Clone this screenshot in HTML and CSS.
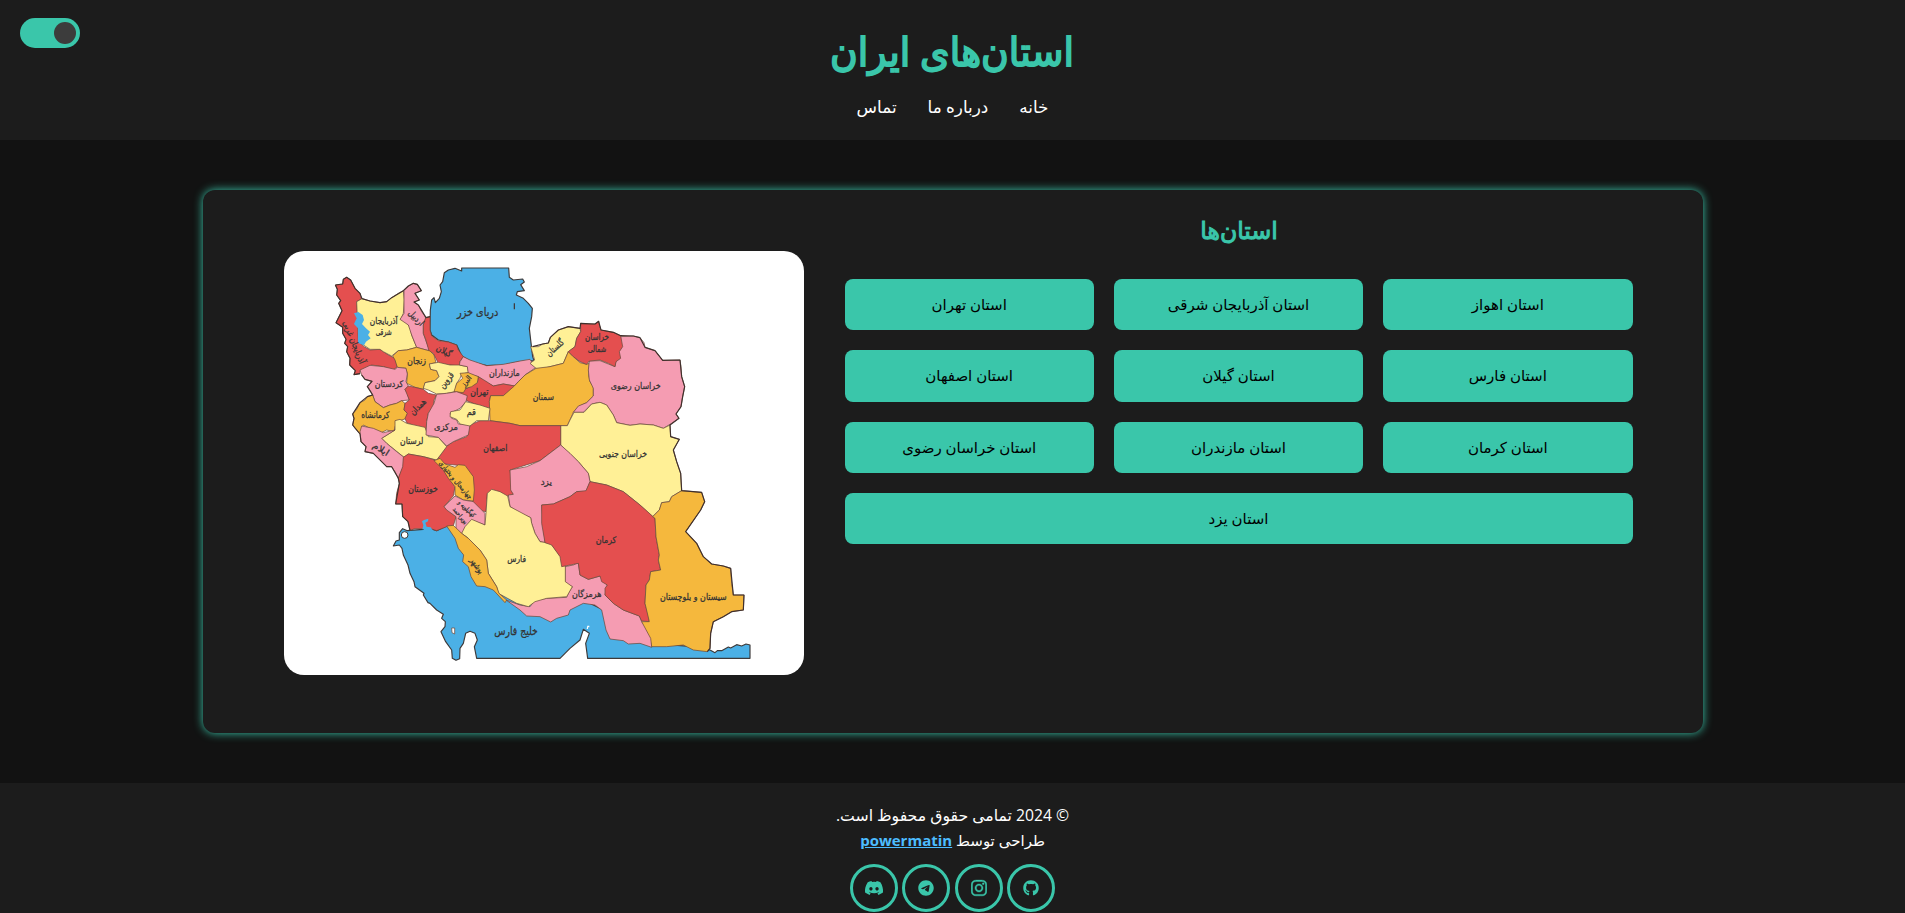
FILE: index.html
```html
<!DOCTYPE html>
<html lang="fa" dir="rtl">
<head>
<meta charset="utf-8">
<title>استان‌های ایران</title>
<link rel="stylesheet" href="styles.css">
</head>
<body>
<header class="header">
  <div class="switch"><span class="knob"></span></div>
  <h1 class="title">استان‌های ایران</h1>
  <nav class="nav"><a>خانه</a><a>درباره ما</a><a>تماس</a></nav>
</header>
<main class="container">
  <section class="provinces">
    <h2 class="subtitle">استان‌ها</h2>
    <div class="grid">
      <a class="btn">استان اهواز</a><a class="btn">استان آذربایجان شرقی</a><a class="btn">استان تهران</a>
      <a class="btn">استان فارس</a><a class="btn">استان گیلان</a><a class="btn">استان اصفهان</a>
      <a class="btn">استان کرمان</a><a class="btn">استان مازندران</a><a class="btn">استان خراسان رضوی</a>
      <a class="btn wide">استان یزد</a>
    </div>
  </section>
  <div class="map">
    <svg viewBox="12 3 1560 1272" width="520" height="424">
      <g class="land">
        <path class="b coast" d="M340,888L348,873 358,870 358,848 368,836 382,842 390,841 430,838 427,815 445,806 444,814 435,818 442,832 470,842 500,828 560,860 660,1030 800,1060 910,1050 970,1080 1010,1160 1115,1180 1240,1190 1290,1200 1305,1208 1312,1202 1325,1202 1345,1191 1352,1194 1370,1184 1385,1188 1398,1182 1410,1185V1225H923L917,1180 928,1150 910,1138 900,1170 870,1195 840,1225H590L583,1190 592,1170 585,1150 570,1144 557,1150 550,1180 540,1195 539,1226 528,1231 517,1225 515,1200 497,1175 483,1145 495,1130 496,1115 485,1105 490,1093 470,1080 450,1060 444,1058 430,1035 432,1030 405,1010 402,995 390,970 384,945 370,915 366,895 358,885Z"/>
        <path class="b coast" d="M493,68L505,60 525,55 545,63V54H686L688,82 700,90 728,87 733,96 722,104 733,122 712,125 709,135 730,145 745,160 757,175 755,200 748,235 752,270 758,320 762,332 720,335 670,345 620,347 580,338 545,318 530,285 505,276 475,270 455,255 450,240 451,180 455,150 462,143 466,158 478,145 484,125 480,105 488,95Z"/>
        <path class="r" d="M166,105L188,102 190,88 200,82 212,90 225,115 240,130 244,148 230,155 232,180 240,210 240,240 235,275 252,290 270,300 300,298 325,315 345,325 352,350 340,360 310,350 275,345 240,362 240,371 222,374 226,362 209,345 210,325 200,305 203,290 194,280 198,268 188,250 188,232 168,218 186,182 176,160 182,152 170,135 172,118Z"/>
        <path class="y" d="M230,155L246,146 270,153 300,158 320,155 335,143 355,130 370,122 373,150 370,190 362,208 378,215 390,232 395,255 405,280 410,292 380,300 355,302 335,318 310,305 300,298 270,298 235,275Z"/>
        <path class="b thin" d="M222,190L235,186 248,195 252,210 246,222 258,235 270,245 264,255 272,265 258,275 252,286 234,279 234,235 222,222 230,205Z"/>
        <path class="p" d="M372,122L385,108 400,100 412,103 424,122 405,130 418,150 402,156 415,165 425,185 438,203 430,225 430,250 437,270 450,303 420,295 410,292 405,280 395,255 385,225 360,208 372,190Z"/>
        <path class="r" d="M437,203L450,200V240L455,258 475,272 505,276 530,285 535,300 550,320 540,335 538,348 510,345 475,340 465,320 460,310 447,303 437,268 430,250 430,225Z"/>
        <path class="o" d="M338,318L355,302 380,300 410,292 450,303 462,315 468,338 448,342 452,358 470,362 477,380 465,392 435,398 430,418 405,412 380,400 382,372 378,355 352,352 345,330Z"/>
        <path class="p" d="M240,360L270,346 310,350 345,358 352,352 378,355 382,372 378,395 385,408 375,418 382,430 388,450 365,452 350,460 330,465 310,473 295,462 285,455 278,435 270,420 262,410 276,394 255,388 245,375Z"/>
        <path class="o" d="M278,435L285,455 310,473 330,465 350,460 365,452 375,460 372,480 382,490 380,505 360,512 345,530 342,545 320,540 300,550 280,540 250,525 240,552 225,535 218,525 222,505 218,492 230,478 240,458 255,450 262,440Z"/>
        <path class="r" d="M385,408L405,412 430,418 445,430 470,435 462,450 460,470 445,490 440,515 438,545 405,528 380,518 375,505 382,490 372,480 375,460 388,450 375,418Z"/>
        <path class="y" d="M448,342L475,337 510,345 538,345 562,350 566,368 545,372 540,385 530,400 525,425 500,430 470,432 445,420 430,415 435,398 465,392 477,380 470,362 452,358Z"/>
        <path class="p" d="M550,320L570,330 620,347 670,343 720,333 750,328 758,340 768,352 735,375 715,395 703,408 670,402 640,408 615,395 595,380 565,372 562,350 538,345 540,335Z"/>
        <path class="r" d="M595,380L615,392 640,408 670,402 705,408 690,425 670,437H632L628,455 632,475 600,468 560,452 555,440 530,428 560,415 592,398Z"/>
        <path class="o" d="M540,370L565,368 595,380 592,398 575,410 558,415 550,428 522,425 530,400 548,385Z"/>
        <path class="y" d="M752,290L775,290 788,282 805,279 811,262 835,240 865,230 900,235 902,245 890,265 885,290 865,305 850,340 810,350 780,358 768,355 750,340 764,330Z"/>
        <path class="o" d="M632,437H670L703,408 715,395 735,375 768,355 810,350 850,340 865,305 880,320 900,338 920,343 928,340 926,375 930,395 940,410V438L920,458 895,470 880,487 870,510 862,527H720L690,520 630,512 628,455Z"/>
        <path class="p" d="M1020,260L1060,258 1080,263 1092,278 1095,292 1125,302 1148,331 1200,330 1203,350 1205,380 1214,410 1208,440 1203,470 1188,492 1197,505 1175,520 1150,535 1120,525 1080,522 1050,526 1010,518 1000,495 980,465 960,457 935,462 910,487H880L895,468 920,458 940,438V415L928,390 925,360 928,333 960,332 985,342 1005,350Z"/>
        <path class="r" d="M902,220L925,222 945,222 956,214 958,225 963,240 1000,247 1022,257 1028,290 1018,305 1022,325 1008,335 1005,350 985,340 960,330 928,333 920,343 900,335 880,320 865,305 885,290 890,265 902,245Z"/>
        <path class="y" d="M842,527H862L870,510 882,487H912L935,462 960,457 980,465 1000,495 1010,518 1050,526 1080,522 1120,525 1150,535 1170,525 1172,560 1198,568 1180,600 1190,635 1202,670 1205,722 1175,740 1168,755 1145,758 1138,780 1118,800 1080,765 1030,725 980,705 930,695 925,670 895,635 842,585Z"/>
        <path class="r" d="M628,512L690,520 720,527H842V585L780,632 690,660 700,733 683,738 622,730 618,785 590,780 578,753 555,648 495,642 470,630 500,588 520,575 560,560 570,525 600,512Z"/>
        <path class="y" d="M345,512L360,508 380,520 435,532 445,560 475,562 500,590 485,610 470,630 430,620 385,612 372,622 345,600 320,580 305,565 345,540Z"/>
        <path class="p" d="M470,433L500,430 530,425 562,437 558,455 540,475 510,490 515,505 530,510 535,522 570,525 565,555 520,575 500,588 475,562 438,555 440,515 445,490 462,460Z"/>
        <path class="y" d="M557,455L600,465 630,475 625,512 590,512 570,528 540,522 530,508 510,500 512,485 540,480Z"/>
        <path class="p" d="M240,545L245,528 280,535 310,548 345,540 305,565 320,580 350,605 372,622 370,650 355,685 345,665 335,650 320,650 300,630 280,610 255,605 258,590 243,575Z"/>
        <path class="r" d="M370,622L385,612 430,620 465,630 490,660 525,710 520,738 492,770 528,800 520,828 500,830 470,842 440,832 427,836 405,836 390,841 384,815 368,800 366,762H347L350,730 358,700 355,685 368,650Z"/>
        <path class="b hook" d="M427,838L430,826 426,814 432,810 445,806 444,814 436,818 440,830 452,832 458,840Z"/>
        <path class="o" d="M462,632L480,625 495,642 525,652 535,644 555,646 580,680 583,720 580,753 550,750 525,735 525,710 505,685 490,660Z"/>
        <path class="p" d="M492,770L525,738 550,750 580,755 600,775 615,790V825L575,810 565,835 545,850 528,840V800L500,780Z"/>
        <path class="p" d="M690,660L740,650 780,632 842,585 870,610 895,635 925,670 930,695 918,725 890,725 870,740 820,762 785,765 795,878 780,875 765,850 755,820 752,803 720,790 690,770 685,735 700,733 692,720Z"/>
        <path class="p" d="M678,1050L720,1065 750,1070 765,1050 800,1045 860,1042 865,1030 877,1010 855,1000V950L880,945 895,937 900,975 925,988 960,978 982,1005 975,1035 1000,1060 1030,1080 1078,1098 1085,1115 1105,1140 1115,1165V1192L1080,1180 1045,1182 1030,1172 990,1167 978,1140 965,1080 945,1065 910,1060 870,1080 865,1095 830,1105 812,1116 780,1100 740,1098 720,1080Z"/>
        <path class="y" d="M622,730L635,718 660,725 683,738 690,770 752,803 755,820 765,850 780,875 812,880 842,920 856,950V995L877,1010 860,1040 800,1045 765,1055 745,1070 710,1060 655,1030 650,1010 625,970 620,930 600,900 565,865 545,850 555,830 575,808 615,825 618,790Z"/>
        <path class="o" d="M500,828L520,826 545,850 565,865 600,900 620,930 625,970 650,1010 657,1030 680,1050 675,1058 640,1020 615,1010 590,1008 573,980 565,950 548,935 551,915 535,895 525,865Z"/>
        <path class="r" d="M930,695L980,705 1030,725 1080,765 1125,805 1128,860 1138,915 1135,930 1142,960 1112,965 1108,990 1098,1005 1095,1060 1105,1095 1108,1115 1085,1113 1078,1098 1030,1080 1000,1060 975,1035V1015L982,1005 965,995 960,978 925,988 900,975 895,940 870,945 845,950 840,920 815,885 795,878 785,820 785,765 820,762 870,740 890,725 918,722Z"/>
        <path class="o" d="M1118,800L1138,780 1145,758 1168,755 1175,740 1205,722 1265,727 1274,755 1262,780 1217,845 1250,880 1270,920 1295,942 1330,948 1352,955 1355,1000 1360,1035 1392,1035 1390,1080 1355,1085 1330,1100 1300,1115 1292,1150 1290,1195 1282,1205 1240,1200 1210,1185 1160,1190 1115,1190 1112,1165 1085,1115H1108L1095,1060 1098,1005 1108,990 1112,965 1142,960 1135,930 1138,915 1128,860 1125,805Z"/>
        <path class="frame" d="M166,105L188,102 190,88 200,82 212,90 225,115 240,130 246,146 270,153 300,158 320,155 335,143 370,122 385,108 400,100 412,103 424,122 405,130 418,150 402,156 415,165 438,203 450,200M758,290L788,282 805,279 811,262 835,240 865,230 900,235 902,220 945,222 956,214 963,240 1000,247 1022,257 1060,258 1080,263 1095,292 1125,302 1148,331 1200,330 1205,380 1214,410 1208,440 1203,470 1188,492 1197,505 1170,525 1172,560 1198,568 1180,600 1190,635 1202,670 1205,722 1265,727 1274,755 1262,780 1217,845 1250,880 1270,920 1295,942 1330,948 1352,955 1360,1035 1392,1035 1390,1080 1355,1085 1330,1100 1300,1115 1292,1150 1290,1195 1282,1205M166,105L172,118 170,135 182,152 176,160 186,182 168,218 188,232 188,250 198,268 194,280 203,290 200,305 210,325 209,345 226,362 222,374 240,371M245,375L255,388 276,394 262,410 278,435 262,440 240,458 218,492 222,505 218,525 240,552 243,575 258,590 255,605 280,610 320,650 335,650 355,685 358,700 347,762 366,762 368,800 384,815 390,841"/>
        <circle class="w" cx="374" cy="855" r="10"/>
        <path class="w" d="M515,1134H524V1152L516,1148Z"/>
        <path class="isle" d="M922,1127h6v5h-4v5h-4z"/>
        <path class="frame" d="M703,160v18"/>
      </g>
      <g class="names">
        <text x="593" y="199" textLength="124" lengthAdjust="spacingAndGlyphs" font-size="34">دریای خزر</text>
        <text x="311" y="223" textLength="84" lengthAdjust="spacingAndGlyphs">آذربایجان</text>
        <text x="311" y="256" textLength="48" lengthAdjust="spacingAndGlyphs">شرقی</text>
        <text transform="translate(214 280) rotate(68)" textLength="136" lengthAdjust="spacingAndGlyphs">آذربایجان غربی</text>
        <text transform="translate(402 210) rotate(46)" textLength="54" lengthAdjust="spacingAndGlyphs">اردبیل</text>
        <text transform="translate(488 311) rotate(27)" textLength="48" lengthAdjust="spacingAndGlyphs">گیلان</text>
        <text x="410" y="341" textLength="56" lengthAdjust="spacingAndGlyphs">زنجان</text>
        <text x="673" y="377" textLength="92" lengthAdjust="spacingAndGlyphs">مازنداران</text>
        <text x="327" y="411" textLength="86" lengthAdjust="spacingAndGlyphs">کردستان</text>
        <text transform="translate(506 396) rotate(-50)" textLength="54" lengthAdjust="spacingAndGlyphs">قزوین</text>
        <text transform="translate(564 398) rotate(-50)" textLength="36" lengthAdjust="spacingAndGlyphs" font-size="22">البرز</text>
        <text x="598" y="434" textLength="54" lengthAdjust="spacingAndGlyphs">تهران</text>
        <text transform="translate(420 477) rotate(-45)" textLength="58" lengthAdjust="spacingAndGlyphs">همدان</text>
        <text x="574" y="494" textLength="28" lengthAdjust="spacingAndGlyphs">قم</text>
        <text x="286" y="503" textLength="84" lengthAdjust="spacingAndGlyphs">کرمانشاه</text>
        <text x="498" y="539" textLength="72" lengthAdjust="spacingAndGlyphs">مرکزی</text>
        <text x="395" y="582" textLength="70" lengthAdjust="spacingAndGlyphs">لرستان</text>
        <text transform="translate(298 605) rotate(32)" textLength="52" lengthAdjust="spacingAndGlyphs">ایلام</text>
        <text x="646" y="602" textLength="72" lengthAdjust="spacingAndGlyphs">اصفهان</text>
        <text x="790" y="449" textLength="64" lengthAdjust="spacingAndGlyphs">سمنان</text>
        <text transform="translate(831 300) rotate(-42)" textLength="62" lengthAdjust="spacingAndGlyphs">گلستان</text>
        <text x="951" y="271" textLength="72" lengthAdjust="spacingAndGlyphs">خراسان</text>
        <text x="951" y="306" textLength="56" lengthAdjust="spacingAndGlyphs">شمالی</text>
        <text x="1067" y="418" textLength="150" lengthAdjust="spacingAndGlyphs">خراسان رضوی</text>
        <text x="1029" y="621" textLength="144" lengthAdjust="spacingAndGlyphs">خراسان جنوبی</text>
        <text x="429" y="727" textLength="88" lengthAdjust="spacingAndGlyphs">خوزستان</text>
        <text transform="translate(522 694) rotate(50)" textLength="142" lengthAdjust="spacingAndGlyphs" font-size="20">چهارمحال و بختیاری</text>
        <text transform="translate(556 781) rotate(44)" textLength="64" lengthAdjust="spacingAndGlyphs" font-size="19">کهگیلویه و</text>
        <text transform="translate(536 801) rotate(50)" textLength="58" lengthAdjust="spacingAndGlyphs" font-size="19">بویراحمد</text>
        <text x="799" y="706" textLength="34" lengthAdjust="spacingAndGlyphs">یزد</text>
        <text transform="translate(584 952) rotate(55)" textLength="52" lengthAdjust="spacingAndGlyphs">بوشهر</text>
        <text x="710" y="937" textLength="56" lengthAdjust="spacingAndGlyphs">فارس</text>
        <text x="978" y="880" textLength="62" lengthAdjust="spacingAndGlyphs">کرمان</text>
        <text x="920" y="1042" textLength="88" lengthAdjust="spacingAndGlyphs">هرمزگان</text>
        <text x="1240" y="1050" textLength="200" lengthAdjust="spacingAndGlyphs">سیستان و بلوچستان</text>
        <text x="708" y="1156" textLength="130" lengthAdjust="spacingAndGlyphs" font-size="34">خلیج فارس</text>
      </g>
    </svg>
  </div>
</main>
<footer class="footer">
  <p>© 2024 تمامی حقوق محفوظ است.</p>
  <p class="by">طراحی توسط <a class="credit">powermatin</a></p>
  <div class="social">
    <a><svg viewBox="0 0 496 512" width="16" height="16"><path d="M165.900 397.400c0 2-2.300 3.600-5.200 3.600-3.300.3-5.600-1.300-5.600-3.600 0-2 2.300-3.600 5.200-3.600 3-.3 5.600 1.300 5.600 3.600zM244.800 8C106.100 8 0 113.300 0 252c0 110.900 69.800 205.800 169.500 239.200 12.800 2.300 17.300-5.600 17.300-12.100 0-6.200-.3-40.400-.3-61.400 0 0-70 15-84.700-29.800 0 0-11.400-29.100-27.800-36.600 0 0-22.900-15.700 1.600-15.400 0 0 24.900 2 38.600 25.800 21.900 38.600 58.600 27.500 72.900 20.900 2.300-16 8.800-27.100 16-33.700-55.900-6.200-112.300-14.300-112.300-110.500 0-27.500 7.600-41.300 23.600-58.900-2.600-6.500-11.100-33.300 2.600-67.900 20.900-6.500 69 27 69 27 20-5.600 41.500-8.500 62.800-8.500s42.800 2.900 62.800 8.500c0 0 48.100-33.600 69-27 13.700 34.700 5.200 61.400 2.600 67.900 16 17.700 25.800 31.500 25.800 58.900 0 96.500-58.900 104.200-114.800 110.500 9.200 7.900 17 22.900 17 46.400 0 33.700-.3 75.400-.3 83.600 0 6.500 4.600 14.400 17.300 12.100C428.200 457.800 496 362.900 496 252 496 113.300 383.500 8 244.800 8z"/></svg></a>
    <a><svg class="bold" viewBox="0 0 448 512" width="16" height="18"><path d="M224.100 141c-63.600 0-114.900 51.300-114.900 114.900s51.300 114.900 114.900 114.900S339 319.500 339 255.900 287.700 141 224.100 141zm0 189.600c-41.100 0-74.700-33.500-74.700-74.700s33.500-74.700 74.700-74.700 74.700 33.500 74.700 74.700-33.600 74.700-74.700 74.700zm146.400-194.300c0 14.900-12 26.800-26.800 26.800-14.900 0-26.800-12-26.800-26.800s12-26.800 26.800-26.800 26.800 12 26.800 26.800zm76.100 27.200c-1.700-35.900-9.900-67.700-36.200-93.900-26.200-26.200-58-34.400-93.900-36.200-37-2.100-147.900-2.100-184.900 0-35.800 1.700-67.600 9.900-93.900 36.100s-34.400 58-36.200 93.900c-2.100 37-2.100 147.900 0 184.900 1.700 35.900 9.900 67.700 36.200 93.900s58 34.400 93.900 36.200c37 2.100 147.900 2.100 184.900 0 35.900-1.700 67.700-9.900 93.900-36.200 26.200-26.200 34.400-58 36.200-93.900 2.100-37 2.100-147.800 0-184.800zM398.800 388c-7.800 19.600-22.900 34.700-42.600 42.600-29.500 11.700-99.500 9-132.100 9s-102.700 2.600-132.100-9c-19.600-7.800-34.700-22.900-42.600-42.600-11.700-29.500-9-99.500-9-132.100s-2.600-102.700 9-132.100c7.800-19.600 22.900-34.700 42.600-42.600 29.500-11.700 99.500-9 132.100-9s102.700-2.600 132.100 9c19.600 7.800 34.700 22.900 42.600 42.600 11.700 29.500 9 99.500 9 132.100s2.700 102.700-9 132.100z"/></svg></a>
    <a><svg viewBox="0 0 496 512" width="16" height="16"><path d="M248 8C111 8 0 119 0 256s111 248 248 248 248-111 248-248S385 8 248 8zm115 169c-4 39-20 134-28 178-4 19-10 25-17 25-14 2-25-9-39-18-22-14-34-23-55-37-25-16-9-25 5-40 4-4 67-61 68-67 0-1 0-3-1-4s-4-1-5-1q-3 1-105 70-15 10-27 10c-9 0-26-5-39-9-15-5-28-8-27-16q1-7 19-14 108-47 144-62c69-29 83-34 92-34 2 0 7 1 10 3 2 2 3 4 4 7q1 4 1 9z"/></svg></a>
    <a><svg viewBox="0 0 640 512" width="20" height="16"><path d="M524.500 69.800a485 485 0 0 0-120-37.100c-6 10-11 20-15 30.500a450 450 0 0 0-134 0c-5-11-10-21-15.500-30.500a484 484 0 0 0-120 37.300C44 183 23 294 34 403a487 487 0 0 0 147 74c12-16 22-33 31.500-51-17-6-34-14-49.500-23l12-9.500c97 44 200 44 292 0l12 9.500c-16 9-32 17-50 23.500 9 18 20 35 31.500 51a486 486 0 0 0 147-74c13-126-22-236-83-334zM222.500 338c-29 0-53-26-53-59s23-59 53-59 53 27 53 59-23 59-53 59zm195 0c-29 0-53-26-53-59s23-59 53-59 53 27 53 59-23 59-53 59z"/></svg></a>
  </div>
</footer>
</body>
</html>
```
FILE: styles.css
```css
* { box-sizing: border-box; }
html, body { margin: 0; height: 913px; overflow: hidden; }
body { background: #121212; color: #fff; font-family: "Segoe UI", "Open Sans", "DejaVu Sans", sans-serif; }
.header { position: relative; height: 140px; background: #1c1c1c; display: flex; flex-direction: column; align-items: center; padding-top: 19px; }
.switch { position: absolute; left: 20px; top: 18px; width: 60px; height: 30px; border-radius: 15px; background: #3ac6aa; }
.knob { position: absolute; right: 4px; top: 4px; width: 22px; height: 22px; border-radius: 50%; background: #3c3c3c; }
.title { margin: 0; font-size: 40px; font-weight: 400; -webkit-text-stroke: 1.8px #3ac6aa; line-height: 63px; color: #3ac6aa; transform: scaleX(.945); }
.nav { display: flex; gap: 31px; margin-top: 12px; font-size: 16.8px; line-height: 26px; }
.container { width: 1500px; height: 543px; margin: 50px auto; background: #1c1c1c; border-radius: 12px; box-shadow: 0 0 10px #3ac6aa; display: flex; justify-content: space-between; padding: 20px 70px 0 81px; }
.provinces { width: 788px; }
.subtitle { margin: 0; text-align: center; font-size: 24px; font-weight: 400; -webkit-text-stroke: 1px #3ac6aa; line-height: 40px; color: #3ac6aa; transform: scaleX(.98); }
.grid { display: grid; grid-template-columns: repeat(3, 1fr); gap: 20px; margin-top: 29px; }
.btn { height: 51.33px; border-radius: 8px; background: #3ac6aa; color: #000; font-size: 15px; line-height: 51px; text-align: center; }
.wide { grid-column: span 3; }
.map { width: 520px; height: 424px; margin-top: 41px; border-radius: 20px; background: #fff; overflow: hidden; }
.map svg { display: block; }
.land path { stroke: #6b4a3c; stroke-width: 2.2; stroke-linejoin: round; }
.land .coast { stroke: #3d3a3a; stroke-width: 3.5; }
.land .frame { fill: none; stroke: #40302c; stroke-width: 3.5; }
.land .thin, .land .hook { stroke: none; }
.land .isle { fill: #fff; stroke: none; }
.b { fill: #4bb0e6; }
.r { fill: #e44f4f; }
.y { fill: #fff096; }
.p { fill: #f59cb2; }
.o { fill: #f5b83d; }
.w { fill: #fff; stroke: #3d3a3a; stroke-width: 3; }
.names { font-family: "DejaVu Sans", sans-serif; font-size: 27px; fill: #333; stroke: #333; stroke-width: .8; text-anchor: middle; }
.footer { height: 130px; background: #1c1c1c; padding-top: 20px; text-align: center; font-size: 15.7px; }
.footer p { margin: 0; line-height: 25px; }
.footer .by { font-size: 15px; }
.credit { color: #4dbcff; font-weight: bold; text-decoration: underline; }
.social { display: flex; justify-content: center; gap: 4.3px; margin-top: 11px; }
.social a { width: 48px; height: 48px; border: 3px solid #3ac6aa; border-radius: 50%; display: flex; align-items: center; justify-content: center; }
.social svg { fill: #3ac6aa; }
.social .bold { stroke: #3ac6aa; stroke-width: 12; }
```
